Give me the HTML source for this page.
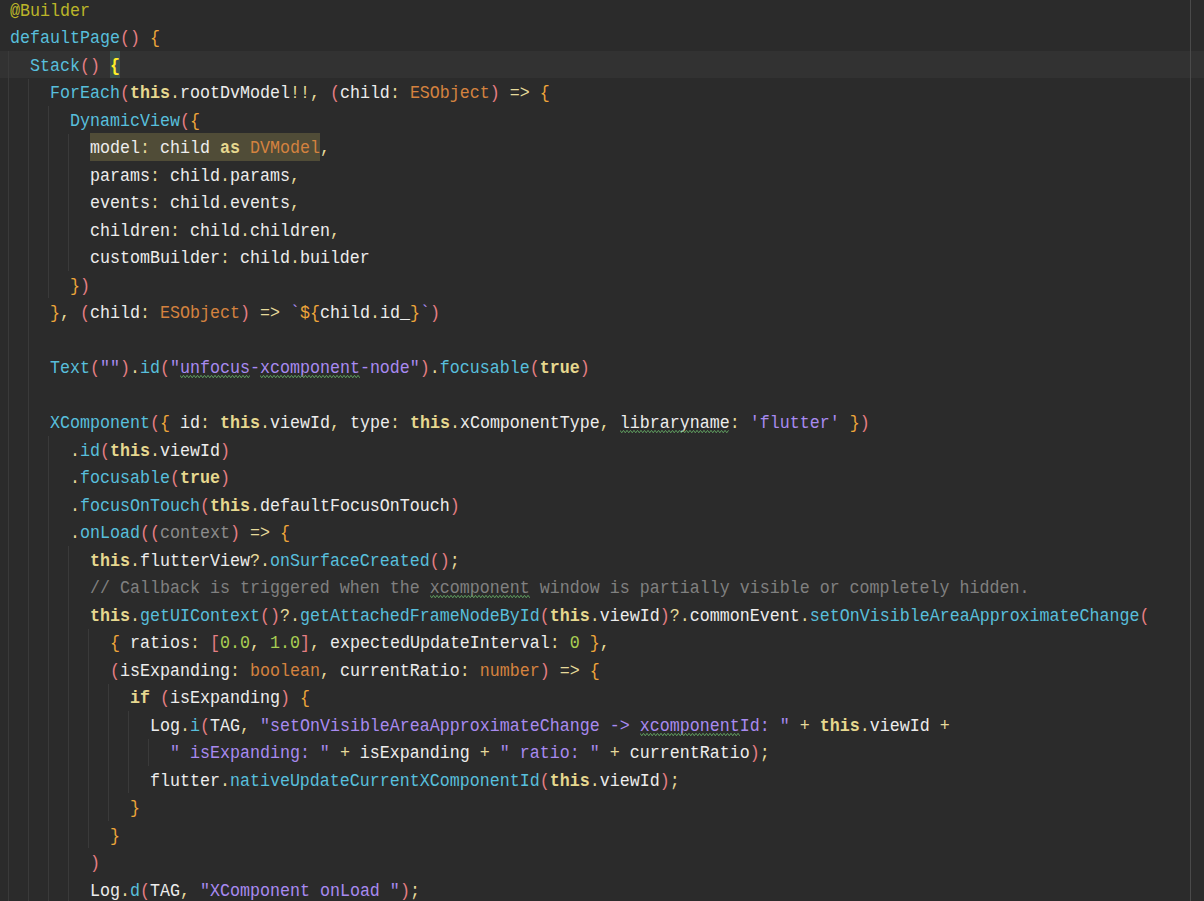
<!DOCTYPE html>
<html><head><meta charset="utf-8"><style>
html,body{margin:0;padding:0;}
body{width:1204px;height:901px;overflow:hidden;background:#2b2b2b;position:relative;}
.cur{position:absolute;left:0;top:51px;width:1204px;height:27px;background:#323232;}
.sel{position:absolute;left:90px;top:133px;width:230px;height:28px;background:#504c37;}
.bm{position:absolute;left:110px;top:51px;width:10px;height:27px;background:#3b514d;}
.g{position:absolute;width:1px;background:#3a3a3a;}
.w{position:absolute;}
.l{position:absolute;left:10px;height:27.5px;line-height:27.5px;white-space:pre;font-family:"Liberation Mono",monospace;font-size:16.6667px;color:#ededed;transform:translateY(2px) scaleY(1.05);transform-origin:0 18px;}
.an{color:#bbb529}
.fn{color:#58bfdc}
.kw{color:#e6d88f;font-weight:bold}
.ty{color:#d4823f}
.un{color:#8c8c8c}
.pa{color:#e57f84}
.br{color:#eea53a}
.bry{color:#ffef28;font-weight:bold}
.st{color:#a88af0}
.nu{color:#a9cf53}
.cm{color:#808080}
.pu{color:#e6da9a}
</style></head>
<body>
<div class="cur"></div><div style="position:absolute;left:1190px;top:0;width:1px;height:901px;background:#4a4a4a"></div><div class="sel"></div><div class="bm"></div>
<div class="g" style="left:8px;top:51px;height:850px"></div><div class="g" style="left:28px;top:79px;height:822px"></div><div class="g" style="left:48px;top:106px;height:192px"></div><div class="g" style="left:68px;top:134px;height:137px"></div><div class="g" style="left:48px;top:436px;height:465px"></div><div class="g" style="left:68px;top:546px;height:355px"></div><div class="g" style="left:88px;top:629px;height:219px"></div><div class="g" style="left:108px;top:684px;height:137px"></div><div class="g" style="left:128px;top:711px;height:82px"></div><div class="g" style="left:148px;top:739px;height:27px"></div>
<div class="l" style="top:-4px"><span class="an">@Builder</span></div><div class="l" style="top:23px"><span class="fn">defaultPage</span><span class="pa">(</span><span class="pa">)</span> <span class="br">{</span></div><div class="l" style="top:51px">  <span class="fn">Stack</span><span class="pa">(</span><span class="pa">)</span> <span class="bry">{</span></div><div class="l" style="top:78px">    <span class="fn">ForEach</span><span class="pa">(</span><span class="kw">this</span><span class="pu">.</span>rootDvModel<span class="pu">!!</span><span class="pu">,</span> <span class="pa">(</span>child<span class="pu">:</span> <span class="ty">ESObject</span><span class="pa">)</span> <span class="pu">=&gt;</span> <span class="br">{</span></div><div class="l" style="top:106px">      <span class="fn">DynamicView</span><span class="pa">(</span><span class="br">{</span></div><div class="l" style="top:133px">        model<span class="pu">:</span> child <span class="kw">as</span> <span class="ty">DVModel</span><span class="pu">,</span></div><div class="l" style="top:161px">        params<span class="pu">:</span> child<span class="pu">.</span>params<span class="pu">,</span></div><div class="l" style="top:188px">        events<span class="pu">:</span> child<span class="pu">.</span>events<span class="pu">,</span></div><div class="l" style="top:216px">        children<span class="pu">:</span> child<span class="pu">.</span>children<span class="pu">,</span></div><div class="l" style="top:243px">        customBuilder<span class="pu">:</span> child<span class="pu">.</span>builder</div><div class="l" style="top:271px">      <span class="br">}</span><span class="pa">)</span></div><div class="l" style="top:298px">    <span class="br">}</span><span class="pu">,</span> <span class="pa">(</span>child<span class="pu">:</span> <span class="ty">ESObject</span><span class="pa">)</span> <span class="pu">=&gt;</span> <span class="st">`</span><span class="br">${</span>child<span class="pu">.</span>id_<span class="br">}</span><span class="st">`</span><span class="pa">)</span></div><div class="l" style="top:326px"></div><div class="l" style="top:353px">    <span class="fn">Text</span><span class="pa">(</span><span class="st">""</span><span class="pa">)</span><span class="pu">.</span><span class="fn">id</span><span class="pa">(</span><span class="st">"unfocus-xcomponent-node"</span><span class="pa">)</span><span class="pu">.</span><span class="fn">focusable</span><span class="pa">(</span><span class="kw">true</span><span class="pa">)</span></div><div class="l" style="top:381px"></div><div class="l" style="top:408px">    <span class="fn">XComponent</span><span class="pa">(</span><span class="br">{</span> id<span class="pu">:</span> <span class="kw">this</span><span class="pu">.</span>viewId<span class="pu">,</span> type<span class="pu">:</span> <span class="kw">this</span><span class="pu">.</span>xComponentType<span class="pu">,</span> libraryname<span class="pu">:</span> <span class="st">'flutter'</span> <span class="br">}</span><span class="pa">)</span></div><div class="l" style="top:436px">      <span class="pu">.</span><span class="fn">id</span><span class="pa">(</span><span class="kw">this</span><span class="pu">.</span>viewId<span class="pa">)</span></div><div class="l" style="top:463px">      <span class="pu">.</span><span class="fn">focusable</span><span class="pa">(</span><span class="kw">true</span><span class="pa">)</span></div><div class="l" style="top:491px">      <span class="pu">.</span><span class="fn">focusOnTouch</span><span class="pa">(</span><span class="kw">this</span><span class="pu">.</span>defaultFocusOnTouch<span class="pa">)</span></div><div class="l" style="top:518px">      <span class="pu">.</span><span class="fn">onLoad</span><span class="pa">(</span><span class="pa">(</span><span class="un">context</span><span class="pa">)</span> <span class="pu">=&gt;</span> <span class="br">{</span></div><div class="l" style="top:546px">        <span class="kw">this</span><span class="pu">.</span>flutterView<span class="pu">?.</span><span class="fn">onSurfaceCreated</span><span class="pa">(</span><span class="pa">)</span><span class="pu">;</span></div><div class="l" style="top:573px">        <span class="cm">// Callback is triggered when the xcomponent window is partially visible or completely hidden.</span></div><div class="l" style="top:601px">        <span class="kw">this</span><span class="pu">.</span><span class="fn">getUIContext</span><span class="pa">(</span><span class="pa">)</span><span class="pu">?.</span><span class="fn">getAttachedFrameNodeById</span><span class="pa">(</span><span class="kw">this</span><span class="pu">.</span>viewId<span class="pa">)</span><span class="pu">?.</span>commonEvent<span class="pu">.</span><span class="fn">setOnVisibleAreaApproximateChange</span><span class="pa">(</span></div><div class="l" style="top:628px">          <span class="br">{</span> ratios<span class="pu">:</span> <span class="pa">[</span><span class="nu">0.0</span><span class="pu">,</span> <span class="nu">1.0</span><span class="pa">]</span><span class="pu">,</span> expectedUpdateInterval<span class="pu">:</span> <span class="nu">0</span> <span class="br">}</span><span class="pu">,</span></div><div class="l" style="top:656px">          <span class="pa">(</span>isExpanding<span class="pu">:</span> <span class="ty">boolean</span><span class="pu">,</span> currentRatio<span class="pu">:</span> <span class="ty">number</span><span class="pa">)</span> <span class="pu">=&gt;</span> <span class="br">{</span></div><div class="l" style="top:683px">            <span class="kw">if</span> <span class="pa">(</span>isExpanding<span class="pa">)</span> <span class="br">{</span></div><div class="l" style="top:711px">              Log<span class="pu">.</span><span class="fn">i</span><span class="pa">(</span>TAG<span class="pu">,</span> <span class="st">"setOnVisibleAreaApproximateChange -&gt; xcomponentId: "</span> <span class="pu">+</span> <span class="kw">this</span><span class="pu">.</span>viewId <span class="pu">+</span></div><div class="l" style="top:738px">                <span class="st">" isExpanding: "</span> <span class="pu">+</span> isExpanding <span class="pu">+</span> <span class="st">" ratio: "</span> <span class="pu">+</span> currentRatio<span class="pa">)</span><span class="pu">;</span></div><div class="l" style="top:766px">              flutter<span class="pu">.</span><span class="fn">nativeUpdateCurrentXComponentId</span><span class="pa">(</span><span class="kw">this</span><span class="pu">.</span>viewId<span class="pa">)</span><span class="pu">;</span></div><div class="l" style="top:793px">            <span class="br">}</span></div><div class="l" style="top:821px">          <span class="br">}</span></div><div class="l" style="top:848px">        <span class="pa">)</span></div><div class="l" style="top:876px">        Log<span class="pu">.</span><span class="fn">d</span><span class="pa">(</span>TAG<span class="pu">,</span> <span class="st">"XComponent onLoad "</span><span class="pa">)</span><span class="pu">;</span></div>
<svg class="w" style="left:180px;top:374px" width="70" height="5"><polyline points="0.00,1.3 1.75,3.8 3.50,1.3 5.25,3.8 7.00,1.3 8.75,3.8 10.50,1.3 12.25,3.8 14.00,1.3 15.75,3.8 17.50,1.3 19.25,3.8 21.00,1.3 22.75,3.8 24.50,1.3 26.25,3.8 28.00,1.3 29.75,3.8 31.50,1.3 33.25,3.8 35.00,1.3 36.75,3.8 38.50,1.3 40.25,3.8 42.00,1.3 43.75,3.8 45.50,1.3 47.25,3.8 49.00,1.3 50.75,3.8 52.50,1.3 54.25,3.8 56.00,1.3 57.75,3.8 59.50,1.3 61.25,3.8 63.00,1.3 64.75,3.8 66.50,1.3 68.25,3.8 70.00,1.3" fill="none" stroke="#5f9c5f" stroke-width="1"/></svg><svg class="w" style="left:260px;top:374px" width="100" height="5"><polyline points="0.00,1.3 1.75,3.8 3.50,1.3 5.25,3.8 7.00,1.3 8.75,3.8 10.50,1.3 12.25,3.8 14.00,1.3 15.75,3.8 17.50,1.3 19.25,3.8 21.00,1.3 22.75,3.8 24.50,1.3 26.25,3.8 28.00,1.3 29.75,3.8 31.50,1.3 33.25,3.8 35.00,1.3 36.75,3.8 38.50,1.3 40.25,3.8 42.00,1.3 43.75,3.8 45.50,1.3 47.25,3.8 49.00,1.3 50.75,3.8 52.50,1.3 54.25,3.8 56.00,1.3 57.75,3.8 59.50,1.3 61.25,3.8 63.00,1.3 64.75,3.8 66.50,1.3 68.25,3.8 70.00,1.3 71.75,3.8 73.50,1.3 75.25,3.8 77.00,1.3 78.75,3.8 80.50,1.3 82.25,3.8 84.00,1.3 85.75,3.8 87.50,1.3 89.25,3.8 91.00,1.3 92.75,3.8 94.50,1.3 96.25,3.8 98.00,1.3 99.75,3.8" fill="none" stroke="#5f9c5f" stroke-width="1"/></svg><svg class="w" style="left:620px;top:429px" width="110" height="5"><polyline points="0.00,1.3 1.75,3.8 3.50,1.3 5.25,3.8 7.00,1.3 8.75,3.8 10.50,1.3 12.25,3.8 14.00,1.3 15.75,3.8 17.50,1.3 19.25,3.8 21.00,1.3 22.75,3.8 24.50,1.3 26.25,3.8 28.00,1.3 29.75,3.8 31.50,1.3 33.25,3.8 35.00,1.3 36.75,3.8 38.50,1.3 40.25,3.8 42.00,1.3 43.75,3.8 45.50,1.3 47.25,3.8 49.00,1.3 50.75,3.8 52.50,1.3 54.25,3.8 56.00,1.3 57.75,3.8 59.50,1.3 61.25,3.8 63.00,1.3 64.75,3.8 66.50,1.3 68.25,3.8 70.00,1.3 71.75,3.8 73.50,1.3 75.25,3.8 77.00,1.3 78.75,3.8 80.50,1.3 82.25,3.8 84.00,1.3 85.75,3.8 87.50,1.3 89.25,3.8 91.00,1.3 92.75,3.8 94.50,1.3 96.25,3.8 98.00,1.3 99.75,3.8 101.50,1.3 103.25,3.8 105.00,1.3 106.75,3.8 108.50,1.3" fill="none" stroke="#5f9c5f" stroke-width="1"/></svg><svg class="w" style="left:430px;top:594px" width="100" height="5"><polyline points="0.00,1.3 1.75,3.8 3.50,1.3 5.25,3.8 7.00,1.3 8.75,3.8 10.50,1.3 12.25,3.8 14.00,1.3 15.75,3.8 17.50,1.3 19.25,3.8 21.00,1.3 22.75,3.8 24.50,1.3 26.25,3.8 28.00,1.3 29.75,3.8 31.50,1.3 33.25,3.8 35.00,1.3 36.75,3.8 38.50,1.3 40.25,3.8 42.00,1.3 43.75,3.8 45.50,1.3 47.25,3.8 49.00,1.3 50.75,3.8 52.50,1.3 54.25,3.8 56.00,1.3 57.75,3.8 59.50,1.3 61.25,3.8 63.00,1.3 64.75,3.8 66.50,1.3 68.25,3.8 70.00,1.3 71.75,3.8 73.50,1.3 75.25,3.8 77.00,1.3 78.75,3.8 80.50,1.3 82.25,3.8 84.00,1.3 85.75,3.8 87.50,1.3 89.25,3.8 91.00,1.3 92.75,3.8 94.50,1.3 96.25,3.8 98.00,1.3 99.75,3.8" fill="none" stroke="#5f9c5f" stroke-width="1"/></svg><svg class="w" style="left:640px;top:732px" width="100" height="5"><polyline points="0.00,1.3 1.75,3.8 3.50,1.3 5.25,3.8 7.00,1.3 8.75,3.8 10.50,1.3 12.25,3.8 14.00,1.3 15.75,3.8 17.50,1.3 19.25,3.8 21.00,1.3 22.75,3.8 24.50,1.3 26.25,3.8 28.00,1.3 29.75,3.8 31.50,1.3 33.25,3.8 35.00,1.3 36.75,3.8 38.50,1.3 40.25,3.8 42.00,1.3 43.75,3.8 45.50,1.3 47.25,3.8 49.00,1.3 50.75,3.8 52.50,1.3 54.25,3.8 56.00,1.3 57.75,3.8 59.50,1.3 61.25,3.8 63.00,1.3 64.75,3.8 66.50,1.3 68.25,3.8 70.00,1.3 71.75,3.8 73.50,1.3 75.25,3.8 77.00,1.3 78.75,3.8 80.50,1.3 82.25,3.8 84.00,1.3 85.75,3.8 87.50,1.3 89.25,3.8 91.00,1.3 92.75,3.8 94.50,1.3 96.25,3.8 98.00,1.3 99.75,3.8" fill="none" stroke="#5f9c5f" stroke-width="1"/></svg>
</body></html>
